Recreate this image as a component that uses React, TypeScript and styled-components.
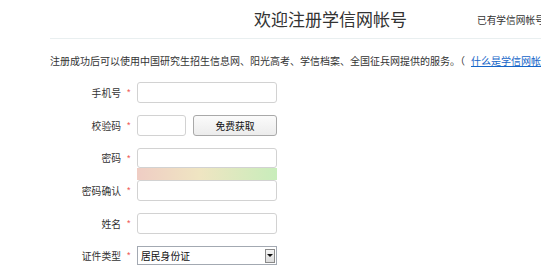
import React from "react";
import styled, { createGlobalStyle } from "styled-components";

const Global = createGlobalStyle`
  html, body { margin: 0; padding: 0; background: #fff; }
  body {
    width: 541px; height: 269px; overflow: hidden;
    font-family: "Microsoft YaHei", "Noto Sans CJK SC", sans-serif;
    color: #333;
  }
`;

const Page = styled.div`
  width: 700px;
  padding-left: 50px;
`;

const Header = styled.header`
  display: flex;
  align-items: center;
  height: 38px;
  border-bottom: 1px solid #e9eff0;
`;

const Title = styled.h1`
  margin: 0 0 0 204px;
  font-size: 17px;
  font-weight: normal;
  color: #333;
  line-height: 20px;
  white-space: nowrap;
`;

const LoginHint = styled.span`
  margin-left: 70px;
  margin-top: 2px;
  font-size: 9.7px;
  color: #333;
  white-space: nowrap;
`;

const Intro = styled.p`
  margin: 14px 0 0 0;
  font-size: 10px;
  line-height: 15px;
  color: #333;
  white-space: nowrap;
`;

const Link = styled.a`
  color: #1565c8;
  text-decoration: underline;
  margin-left: 6px;
`;

const Form = styled.div`
  display: flex;
  flex-direction: column;
  gap: 12px;
  margin-top: 14px;
`;

const Group = styled.div`
  display: flex;
  flex-direction: column;
`;

const Row = styled.div<{ $h?: number }>`
  display: flex;
  align-items: center;
  height: ${(p) => p.$h ?? 21}px;
`;

const Label = styled.label`
  width: 71px;
  text-align: right;
  font-size: 9.8px;
  color: #333;
  white-space: nowrap;
`;

const Star = styled.span`
  width: 16px;
  box-sizing: border-box;
  padding-left: 6px;
  color: #f05050;
  font-size: 9px;
  line-height: 1;
  font-family: "Liberation Sans", sans-serif;
`;

const Input = styled.div<{ $w?: number }>`
  box-sizing: border-box;
  width: ${(p) => p.$w ?? 140}px;
  height: 100%;
  border: 1px solid #d2d2d2;
  border-radius: 3px;
  background: #fff;
`;

const Button = styled.button`
  box-sizing: border-box;
  margin-left: 7px;
  width: 84px;
  height: 100%;
  border: 1px solid #a9a9a9;
  border-radius: 3px;
  background: linear-gradient(#fbfbfb, #ececec);
  font-family: "Microsoft YaHei", "Noto Sans CJK SC", sans-serif;
  font-size: 9.8px;
  color: #111;
  padding: 0;
`;

const Spacer = styled.div`
  width: 87px;
`;

const Strength = styled.div`
  width: 140px;
  height: 12px;
  background: linear-gradient(90deg, #efcdc4 0%, #efe5c2 45%, #c8edbb 100%);
`;

const Select = styled.div`
  box-sizing: border-box;
  width: 140px;
  height: 100%;
  border: 1px solid #a3a9b2;
  display: flex;
  align-items: center;
  justify-content: space-between;
  padding: 0 1px 0 3px;
  font-size: 9.8px;
  color: #111;
  background: #fff;
`;

const Arrow = styled.div`
  box-sizing: border-box;
  width: 10px;
  height: 14px;
  border: 1px solid #8a8a8a;
  background: linear-gradient(#f4f4f4, #dcdcdc);
  display: flex;
  align-items: center;
  justify-content: center;
  &::after {
    content: "";
    border-left: 3px solid transparent;
    border-right: 3px solid transparent;
    border-top: 3px solid #111;
  }
`;

export default function App() {
  return (
    <>
      <Global />
      <Page>
        <Header>
          <Title>欢迎注册学信网帐号</Title>
          <LoginHint>已有学信网帐号，</LoginHint>
        </Header>
        <Intro>
          注册成功后可以使用中国研究生招生信息网、阳光高考、学信档案、全国征兵网提供的服务。（
          <Link href="#">什么是学信网帐号</Link>）
        </Intro>
        <Form>
          <Row>
            <Label>手机号</Label>
            <Star>*</Star>
            <Input />
          </Row>
          <Row>
            <Label>校验码</Label>
            <Star>*</Star>
            <Input $w={49} />
            <Button>免费获取</Button>
          </Row>
          <Group>
            <Row $h={20}>
              <Label>密码</Label>
              <Star>*</Star>
              <Input />
            </Row>
            <Row $h={12}>
              <Spacer />
              <Strength />
            </Row>
            <Row $h={21}>
              <Label>密码确认</Label>
              <Star>*</Star>
              <Input />
            </Row>
          </Group>
          <Row>
            <Label>姓名</Label>
            <Star>*</Star>
            <Input />
          </Row>
          <Row $h={19}>
            <Label>证件类型</Label>
            <Star>*</Star>
            <Select>
              居民身份证
              <Arrow />
            </Select>
          </Row>
        </Form>
      </Page>
    </>
  );
}
